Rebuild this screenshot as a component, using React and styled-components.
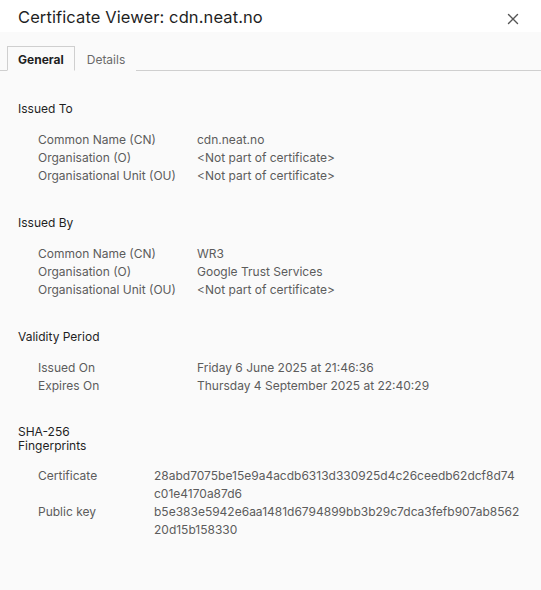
import React from 'react'
import styled, { createGlobalStyle } from 'styled-components'

const Global = createGlobalStyle`
  html, body {
    margin: 0;
    padding: 0;
    background: #fafafa;
  }
  body {
    font-family: Inter, "Liberation Sans", Arial, sans-serif;
  }
`

const sections = [
  {
    title: 'Issued To',
    rows: [
      ['Common Name (CN)', 'cdn.neat.no'],
      ['Organisation (O)', '<Not part of certificate>'],
      ['Organisational Unit (OU)', '<Not part of certificate>'],
    ],
  },
  {
    title: 'Issued By',
    rows: [
      ['Common Name (CN)', 'WR3'],
      ['Organisation (O)', 'Google Trust Services'],
      ['Organisational Unit (OU)', '<Not part of certificate>'],
    ],
  },
  {
    title: 'Validity Period',
    rows: [
      ['Issued On', 'Friday 6 June 2025 at 21:46:36'],
      ['Expires On', 'Thursday 4 September 2025 at 22:40:29'],
    ],
  },
]

const fingerprints = [
  ['Certificate', ['28abd7075be15e9a4acdb6313d330925d4c26ceedb62dcf8d74', 'c01e4170a87d6']],
  ['Public key', ['b5e383e5942e6aa1481d6794899bb3b29c7dca3fefb907ab8562', '20d15b158330']],
]

function App() {
  return (
    <Dialog>
      <Global />
      <Header>
        <Title>Certificate Viewer: cdn.neat.no</Title>
        <CloseButton aria-label="Close">
          <svg width="12" height="12" viewBox="0 0 12 12">
            <path d="M1.5 1.5 L10.5 10.5 M10.5 1.5 L1.5 10.5" stroke="#555" strokeWidth="1.4" strokeLinecap="round" />
          </svg>
        </CloseButton>
      </Header>

      <Tabs>
        <Tab active>General</Tab>
        <Tab>Details</Tab>
      </Tabs>

      <Content>
        {sections.map((s) => (
          <Section key={s.title}>
            <SectionTitle>{s.title}</SectionTitle>
            <Table>
              {s.rows.map(([k, v]) => (
                <React.Fragment key={k}>
                  <Label>{k}</Label>
                  <Value>{v}</Value>
                </React.Fragment>
              ))}
            </Table>
          </Section>
        ))}

        <Section>
          <FingerTitle>SHA-256<br />Fingerprints</FingerTitle>
          <Table narrow>
            {fingerprints.map(([k, lines]) => (
              <React.Fragment key={k}>
                <Label>{k}</Label>
                <Value>
                  {lines.map((l) => (
                    <Line key={l}>{l}</Line>
                  ))}
                </Value>
              </React.Fragment>
            ))}
          </Table>
        </Section>
      </Content>
    </Dialog>
  )
}

export default App

const Dialog = styled.div`
  width: 541px;
  min-height: 590px;
  background: #fafafa;
`

const Header = styled.div`
  height: 32px;
  background: #ffffff;
  display: flex;
  align-items: center;
  justify-content: space-between;
  padding: 0 22px 0 18px;
  box-sizing: border-box;
`

const Title = styled.h1`
  margin: 2px 0 0;
  font-size: 16.5px;
  font-weight: 400;
  color: #1f1f1f;
  letter-spacing: 0.1px;
`

const CloseButton = styled.button`
  border: none;
  background: none;
  padding: 0;
  width: 12px;
  height: 12px;
  display: flex;
  margin-top: 6px;
  cursor: pointer;
`

const Tabs = styled.div`
  display: flex;
  margin-top: 14px;
  padding-left: 7px;
  border-bottom: 1px solid #cfcfcf;
  height: 24px;
`

const Tab = styled.div`
  box-sizing: border-box;
  height: 25px;
  padding: 2px 10px 0;
  margin-bottom: -1px;
  display: flex;
  align-items: center;
  font-size: 12px;
  font-weight: ${(p) => (p.active ? 700 : 400)};
  color: ${(p) => (p.active ? '#1f1f1f' : '#6a6a6a')};
  border: 1px solid ${(p) => (p.active ? '#cfcfcf' : 'transparent')};
  border-bottom: 1px solid ${(p) => (p.active ? '#fafafa' : 'transparent')};
  background: #fafafa;
  & + & {
    padding-left: 11px;
  }
`

const Content = styled.div`
  padding: 0 18px 40px;
`

const Section = styled.div`
  margin-top: 29px;
  &:first-child {
    margin-top: 29px;
  }
  &:last-child {
    margin-top: 30px;
  }
`

const SectionTitle = styled.div`
  font-size: 12px;
  line-height: 18px;
  color: #1f1f1f;
`

const FingerTitle = styled.div`
  font-size: 12px;
  line-height: 14px;
  color: #1f1f1f;
`

const Table = styled.div`
  display: grid;
  grid-template-columns: ${(p) => (p.narrow ? '116px' : '159px')} 1fr;
  padding-left: 20px;
  margin-top: ${(p) => (p.narrow ? '14px' : '13px')};
`

const Label = styled.div`
  font-size: 12px;
  line-height: 18px;
  color: #5c5c5c;
`

const Value = styled.div`
  font-size: 12px;
  line-height: 18px;
  color: #5c5c5c;
`

const Line = styled.div``
